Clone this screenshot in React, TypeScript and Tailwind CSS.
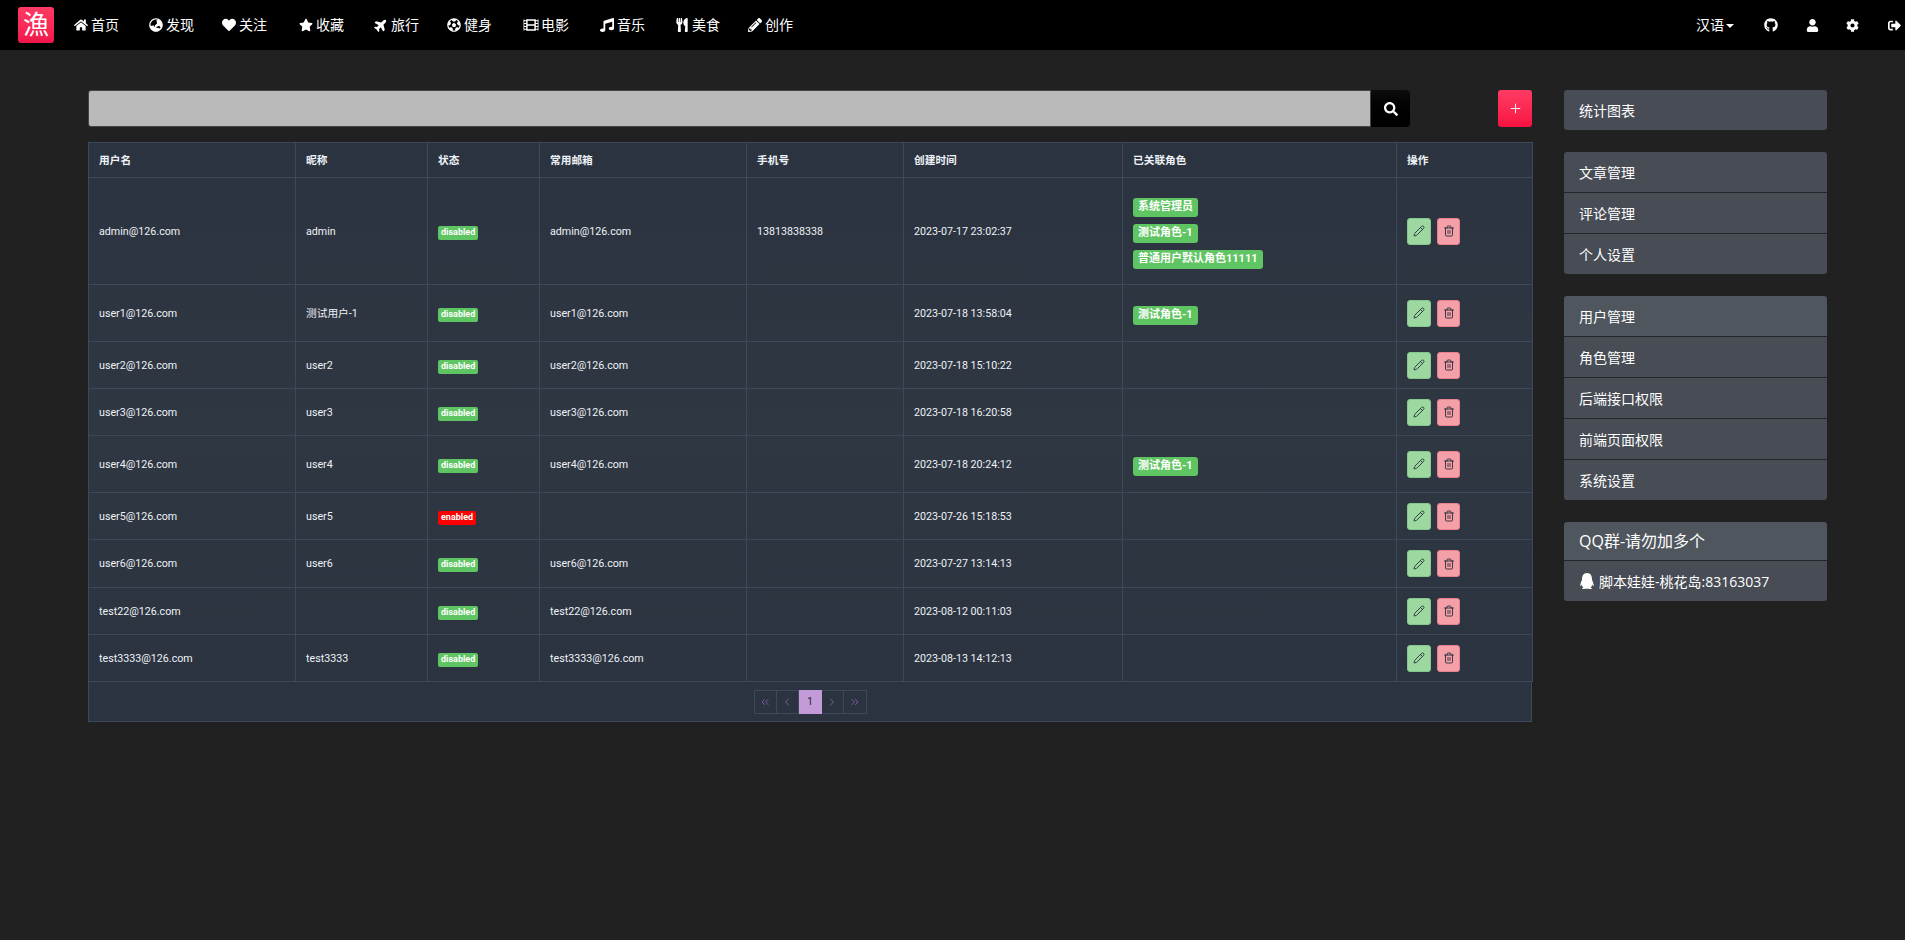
import React from "react";
import { FaHome, FaGlobeAsia, FaHeart, FaStar, FaPlane, FaFutbol, FaFilm, FaMusic, FaUtensils, FaPencilAlt, FaGithub, FaUser, FaCog, FaSignOutAlt, FaSearch, FaQq } from "react-icons/fa";
import { Pencil, Trash2, ChevronsLeft, ChevronLeft, ChevronRight, ChevronsRight, Plus } from "lucide-react";

const font = "font-['Roboto','Noto_Sans_CJK_SC',sans-serif]";
const openSans = "font-['Open_Sans','Noto_Sans_CJK_SC',sans-serif]";

const nav: [React.ElementType, string, string, string][] = [
  [FaHome, "首页", "w-[75px]", ""],
  [FaGlobeAsia, "发现", "w-[73px]", ""],
  [FaHeart, "关注", "w-[77px]", ""],
  [FaStar, "收藏", "w-[75px]", ""],
  [FaPlane, "旅行", "w-[73px]", "-rotate-45"],
  [FaFutbol, "健身", "w-[77px]", ""],
  [FaFilm, "电影", "w-[76px]", "scale-110"],
  [FaMusic, "音乐", "w-[75px]", ""],
  [FaUtensils, "美食", "w-[73px]", ""],
  [FaPencilAlt, "创作", "w-[75px]", ""],
];

type Row = { u: string; n: string; on?: boolean; m: string; p: string; t: string; r: string[]; h: string };
const rows: Row[] = [
  { u: "admin@126.com", n: "admin", m: "admin@126.com", p: "13813838338", t: "2023-07-17 23:02:37", r: ["系统管理员", "测试角色-1", "普通用户默认角色11111"], h: "h-[107px]" },
  { u: "user1@126.com", n: "测试用户-1", m: "user1@126.com", p: "", t: "2023-07-18 13:58:04", r: ["测试角色-1"], h: "h-[57px]" },
  { u: "user2@126.com", n: "user2", m: "user2@126.com", p: "", t: "2023-07-18 15:10:22", r: [], h: "h-[47px]" },
  { u: "user3@126.com", n: "user3", m: "user3@126.com", p: "", t: "2023-07-18 16:20:58", r: [], h: "h-[47px]" },
  { u: "user4@126.com", n: "user4", m: "user4@126.com", p: "", t: "2023-07-18 20:24:12", r: ["测试角色-1"], h: "h-[57px]" },
  { u: "user5@126.com", n: "user5", on: true, m: "", p: "", t: "2023-07-26 15:18:53", r: [], h: "h-[47px]" },
  { u: "user6@126.com", n: "user6", m: "user6@126.com", p: "", t: "2023-07-27 13:14:13", r: [], h: "h-[48px]" },
  { u: "test22@126.com", n: "", m: "test22@126.com", p: "", t: "2023-08-12 00:11:03", r: [], h: "h-[47px]" },
  { u: "test3333@126.com", n: "test3333", m: "test3333@126.com", p: "", t: "2023-08-13 14:12:13", r: [], h: "h-[47px]" },
];

const th = "border border-[#3d4858] px-[10px] pt-[2px] text-left align-middle text-[10.7px] font-bold text-[#eef2f6]";
const td = "border border-[#3d4858] px-[10px] align-middle text-[10.7px] text-[#eef2f6]";
const tx = `${td} pt-[2px]`;

function Side({ items, first }: { items: string[]; first?: boolean }) {
  return (
    <div className="mb-[22px] overflow-hidden rounded-[3px]">
      {items.map((s, i) => (
        <div key={s} className={`flex items-center px-[15px] pt-[2px] text-[14px] text-white ${i > 0 ? "h-[41px] border-t border-[#23262a]" : "h-[40px]"} ${first && i === 0 ? "bg-[#50565e]" : "bg-[#474c55]"}`}>{s}</div>
      ))}
    </div>
  );
}

export default function App() {
  return (
    <div className={`min-h-[940px] bg-[#212121] ${font}`}>
      <header className="flex h-[50px] items-center bg-black pl-[18px] pr-[4px] text-[14px] text-white">
        <div className="mr-[5px] flex h-[36px] w-[36px] items-center justify-center rounded-[3px] bg-gradient-to-b from-[#ff3a64] to-[#f0164a] text-[26px] leading-none">漁</div>
        {nav.map(([I, t, w, c]) => (
          <div key={t} className={`flex items-center gap-[3px] pl-[15px] ${w}`}>
            <I className={`h-[14px] w-[14px] shrink-0 ${c}`} />
            <span>{t}</span>
          </div>
        ))}
        <div className="ml-auto flex items-center">
          <span>汉语</span>
          <span className="ml-[2px] mt-[2px] border-x-[4px] border-t-[4px] border-x-transparent border-t-white" />
          <FaGithub className="ml-[30px] h-[14px] w-[14px]" />
          <FaUser className="ml-[28px] h-[13px] w-[13px]" />
          <FaCog className="ml-[27px] h-[13px] w-[13px]" />
          <FaSignOutAlt className="ml-[29px] h-[13px] w-[13px]" />
        </div>
      </header>
      <main className="flex items-start gap-[32px] pl-[88px] pr-[78px] pt-[40px]">
        <div className="w-[1444px]">
          <div className="mb-[15px] flex h-[37px] justify-between">
            <div className="flex w-[1322px]">
              <div className="flex-1 rounded-l-[3px] border border-[#444] bg-[#bababa]" />
              <div className="flex w-[39px] items-center justify-center rounded-r-[4px] bg-gradient-to-b from-[#0d0d0d] to-black text-white"><FaSearch className="h-[14px] w-[14px]" /></div>
            </div>
            <div className="flex w-[34px] items-center justify-center rounded-[3px] bg-gradient-to-b from-[#ff3a64] to-[#f70f40] text-white"><Plus className="h-[15px] w-[15px]" strokeWidth={1.5} /></div>
          </div>
          <div className="bg-gradient-to-b from-[#2b3340] via-[#2f3743] to-[#2b3340]">
            <table className="w-full table-fixed border-collapse">
              <colgroup>
                <col className="w-[207px]" /><col className="w-[132px]" /><col className="w-[112px]" /><col className="w-[207px]" /><col className="w-[157px]" /><col className="w-[219px]" /><col className="w-[274px]" /><col className="w-[136px]" />
              </colgroup>
              <thead>
                <tr className="h-[35px]">
                  {["用户名", "昵称", "状态", "常用邮箱", "手机号", "创建时间", "已关联角色", "操作"].map((h) => <th key={h} className={th}>{h}</th>)}
                </tr>
              </thead>
              <tbody>
                {rows.map((r) => (
                  <tr key={r.u} className={r.h}>
                    <td className={tx}>{r.u}</td>
                    <td className={tx}>{r.n}</td>
                    <td className={tx}>
                      <div className="flex pt-[1px]">
                        <span className={`flex h-[14px] items-center rounded-[2px] px-[3px] text-[9px] font-bold text-white ${r.on ? "bg-[#ff0000]" : "bg-[#5fc462]"}`}>{r.on ? "enabled" : "disabled"}</span>
                      </div>
                    </td>
                    <td className={tx}>{r.m}</td>
                    <td className={tx}>{r.p}</td>
                    <td className={tx}>{r.t}</td>
                    <td className={tx}>
                      {r.r.length > 0 && (
                        <div className="flex flex-col items-start gap-[7px] pt-[3px]">
                          {r.r.map((x) => <span key={x} className="inline-flex h-[19px] items-center rounded-[3px] bg-[#5fc462] px-[5px] text-[11px] font-bold text-white">{x}</span>)}
                        </div>
                      )}
                    </td>
                    <td className={td}>
                      <div className="flex gap-[6px]">
                        <span className="flex h-[27px] w-[24px] items-center justify-center rounded-[3px] border border-[#84c98c] bg-[#9cd8a0] text-[#232c38]"><Pencil className="h-[12px] w-[12px]" strokeWidth={1.75} /></span>
                        <span className="flex h-[27px] w-[23px] items-center justify-center rounded-[3px] border border-[#e8808e] bg-[#f5a0a8] text-[#232c38]"><Trash2 className="h-[12px] w-[12px]" strokeWidth={1.75} /></span>
                      </div>
                    </td>
                  </tr>
                ))}
              </tbody>
            </table>
            <div className="flex h-[40px] items-center justify-center border-x border-b border-[#3d4858]">
              <div className="flex h-[24px] items-center text-[#7a5f96]">
                <span className="flex h-full w-[23px] items-center justify-center border border-[#3d4858]"><ChevronsLeft className="h-[12px] w-[12px]" /></span>
                <span className="flex h-full w-[22px] items-center justify-center border-y border-r border-[#3d4858]"><ChevronLeft className="h-[12px] w-[12px]" /></span>
                <span className="flex h-full w-[23px] items-center justify-center bg-[#c39bd9] text-[10px] text-[#222]">1</span>
                <span className="flex h-full w-[22px] items-center justify-center border-y border-r border-[#3d4858]"><ChevronRight className="h-[12px] w-[12px]" /></span>
                <span className="flex h-full w-[23px] items-center justify-center border-y border-r border-[#3d4858]"><ChevronsRight className="h-[12px] w-[12px]" /></span>
              </div>
            </div>
          </div>
        </div>
        <aside className="w-[263px]">
          <Side items={["统计图表"]} />
          <Side items={["文章管理", "评论管理", "个人设置"]} />
          <Side first items={["用户管理", "角色管理", "后端接口权限", "前端页面权限", "系统设置"]} />
          <div className={`overflow-hidden rounded-[3px] ${openSans}`}>
            <div className="flex h-[38px] items-center bg-[#50565e] px-[15px] text-[16px] text-white">QQ群-请勿加多个</div>
            <div className="flex h-[41px] items-center gap-[4px] border-t border-[#23262a] bg-[#474c55] px-[15px] text-[14px] text-white"><FaQq className="h-[16px] w-[16px]" />脚本娃娃-桃花岛:83163037</div>
          </div>
        </aside>
      </main>
    </div>
  );
}
